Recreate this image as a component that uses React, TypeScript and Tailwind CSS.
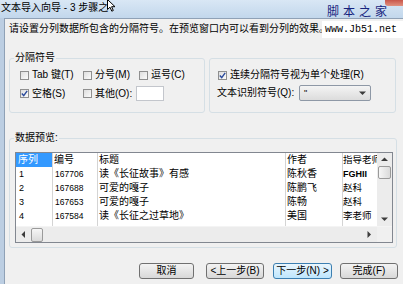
import React from "react";

const Check = ({ checked }: { checked?: boolean }) => (
  <span className="w-[9px] h-[9px] shrink-0 border border-[#8f8f8f] bg-gradient-to-br from-[#dedede] to-[#fbfbfb] flex items-center justify-center">
    {checked && (
      <svg width="7" height="7" viewBox="0 0 7 7">
        <path d="M0.8 3.6 L2.7 5.6 L6.2 0.8" fill="none" stroke="#2a4a9c" strokeWidth="1.4" />
      </svg>
    )}
  </span>
);

const CheckItem = ({
  label,
  checked,
  width,
}: {
  label: string;
  checked?: boolean;
  width: string;
}) => (
  <div className={`flex items-center gap-[3px] ${width}`}>
    <Check checked={checked} />
    <span className="leading-[12px] whitespace-nowrap">{label}</span>
  </div>
);

const Arrow = ({ dir }: { dir: "up" | "down" | "left" | "right" }) => {
  const d =
    dir === "up"
      ? "M0 4 L3.5 0.5 L7 4 Z"
      : dir === "down"
      ? "M0 0.5 L3.5 4 L7 0.5 Z"
      : dir === "left"
      ? "M4 0 L0.5 3.5 L4 7 Z"
      : "M0.5 0 L4 3.5 L0.5 7 Z";
  const vertical = dir === "up" || dir === "down";
  return (
    <svg width={vertical ? 7 : 5} height={vertical ? 5 : 7} viewBox={vertical ? "0 0 7 5" : "0 0 5 7"}>
      <path d={d} fill="#3c3c3c" />
    </svg>
  );
};

const rows = [
  ["1", "167706", "读《长征故事》有感", "陈秋香", "FGHII"],
  ["2", "167688", "可爱的嘎子", "陈鹏飞", "赵科"],
  ["3", "167653", "可爱的嘎子", "陈畅", "赵科"],
  ["4", "167584", "读《长征之过草地》", "美国", "李老师"],
];

const columns = [
  { title: "序列", width: "w-[37px]", border: true },
  { title: "编号", width: "w-[45px]", border: true },
  { title: "标题", width: "w-[188px]", border: true },
  { title: "作者", width: "w-[57px]", border: true },
  { title: "指导老师", width: "w-[34px]", border: false },
];

const App: React.FC = () => {
  return (
    <div className="relative w-[403px] h-[284px] overflow-hidden bg-[#bccee2] text-[10px] text-black font-['Liberation_Sans','Noto_Sans_CJK_SC',sans-serif]">
      {/* Title bar */}
      <div className="h-[18px] flex items-center pl-[1px] pb-[2px] bg-gradient-to-b from-[#d9e7f5] to-[#c2d7ec]">
        <span className="leading-[12px]">文本导入向导 - 3 步骤之</span>
      </div>

      {/* Dialog body */}
      <div className="ml-[4px] h-[266px] border-l border-t border-[#8fa1b6] bg-[#f0f0f0] flex flex-col">
        <p className="mt-[4px] ml-[4px] h-[12px] leading-[12px] whitespace-nowrap">
          请设置分列数据所包含的分隔符号。在预览窗口内可以看到分列的效果。
        </p>

        {/* Delimiter groups */}
        <div className="mt-[17px] ml-[4px] flex items-start gap-[4px]">
          <fieldset className="w-[196px] h-[61px] border border-[#d5dfe5] rounded-[3px] p-0">
            <legend className="ml-[4px] px-[1px] leading-[12px]">分隔符号</legend>
            <div className="mt-[4px] pl-[10px] h-[14px] flex items-center">
              <CheckItem label="Tab 键(T)" width="w-[63px]" />
              <CheckItem label="分号(M)" width="w-[56px]" />
              <CheckItem label="逗号(C)" width="w-[50px]" />
            </div>
            <div className="mt-[4px] pl-[10px] h-[15px] flex items-center">
              <CheckItem label="空格(S)" checked width="w-[63px]" />
              <CheckItem label="其他(O):" width="w-[53px]" />
              <span className="w-[28px] h-[15px] border border-[#c3c6cc] bg-white" />
            </div>
          </fieldset>

          <fieldset className="mt-[6px] w-[187px] h-[55px] border border-[#d5dfe5] rounded-[3px] p-0">
            <div className="mt-[9px] pl-[8px] h-[14px] flex items-center">
              <CheckItem label="连续分隔符号视为单个处理(R)" checked width="w-[170px]" />
            </div>
            <div className="mt-[3px] pl-[7px] h-[16px] flex items-center">
              <span className="w-[82px] leading-[12px] whitespace-nowrap">文本识别符号(Q):</span>
              <div className="w-[72px] h-[16px] border border-[#8e98a6] rounded-[2px] bg-gradient-to-b from-[#f4f4f4] to-[#dcdcdc] flex items-center justify-between pl-[4px] pr-[4px]">
                <span className="leading-[10px] text-[9px]">"</span>
                <Arrow dir="down" />
              </div>
            </div>
          </fieldset>
        </div>

        {/* Data preview */}
        <fieldset className="mt-[19px] ml-[4px] w-[388px] h-[116px] border border-[#d5dfe5] rounded-[3px] p-0">
          <legend className="ml-[4px] px-[1px] leading-[12px]">数据预览:</legend>
          <div className="mt-[8px] ml-[5px] w-[378px] h-[91px] border border-[#828790] bg-white flex flex-col">
            <div className="flex h-[73px]">
              <div className="flex w-[361px] overflow-hidden">
                {columns.map((col, ci) => (
                  <div
                    key={col.title}
                    className={`${col.width} shrink-0 overflow-hidden ${col.border ? "border-r border-[#d4d4d4]" : ""}`}
                  >
                    <div
                      className={`h-[14px] leading-[14px] whitespace-nowrap ${
                        ci === 0 ? "bg-[#3399ff] text-white pl-[2px]" : ci === 4 ? "pl-[0px] text-[9.5px]" : "pl-[1px]"
                      }`}
                    >
                      {col.title}
                    </div>
                    {rows.map((r) => (
                      <div
                        key={r[0] + ci}
                        className={`h-[14px] leading-[14px] whitespace-nowrap ${
                          ci === 0 ? "pl-[3px] text-[9px]" : ci === 1 ? "pl-[2px] text-[8.5px]" : ci === 4 ? "pl-[0px] text-[9.5px]" : "pl-[1px]"
                        } ${r[ci] === "FGHII" ? "text-[9px] font-bold" : ""}`}
                      >
                        {r[ci]}
                      </div>
                    ))}
                  </div>
                ))}
              </div>
              {/* Vertical scrollbar */}
              <div className="w-[15px] bg-[#ececec] flex flex-col items-center">
                <div className="h-[13px] flex items-center justify-center">
                  <Arrow dir="up" />
                </div>
                <div className="w-[13px] h-[13px] border border-[#9a9a9a] rounded-[2px] bg-gradient-to-r from-[#f6f6f6] to-[#dadada]" />
                <div className="flex-1" />
                <div className="h-[14px] flex items-center justify-center">
                  <Arrow dir="down" />
                </div>
              </div>
            </div>
            {/* Horizontal scrollbar */}
            <div className="h-[16px] flex border-t border-[#f4f4f4]">
              <div className="flex-1 bg-[#ececec] flex items-center">
                <div className="w-[15px] flex items-center justify-center">
                  <Arrow dir="left" />
                </div>
                <div className="w-[12px] h-[14px] border border-[#9a9a9a] rounded-[2px] bg-gradient-to-b from-[#f6f6f6] to-[#dadada]" />
                <div className="flex-1" />
                <div className="w-[15px] flex items-center justify-center">
                  <Arrow dir="right" />
                </div>
              </div>
              <div className="w-[15px] bg-[#f0f0f0]" />
            </div>
          </div>
        </fieldset>

        {/* Buttons */}
        <div className="mt-[15px] ml-[134px] flex items-center">
          <div className="w-[55px] h-[16px] border border-[#707070] rounded-[3px] bg-gradient-to-b from-[#f3f3f3] to-[#d8d8d8] flex items-center justify-center leading-[12px]">
            取消
          </div>
          <div className="ml-[12px] w-[58px] h-[16px] border border-[#707070] rounded-[3px] bg-gradient-to-b from-[#f3f3f3] to-[#d8d8d8] flex items-center justify-center leading-[12px] whitespace-nowrap">
            &lt;上一步(B)
          </div>
          <div className="ml-[9px] w-[59px] h-[16px] border border-[#3c7fb1] rounded-[3px] bg-gradient-to-b from-[#eaf6fd] to-[#bee6fd] flex items-center justify-center leading-[12px] whitespace-nowrap">
            下一步(N) &gt;
          </div>
          <div className="ml-[8px] w-[58px] h-[16px] border border-[#707070] rounded-[3px] bg-gradient-to-b from-[#f3f3f3] to-[#d8d8d8] flex items-center justify-center leading-[12px] whitespace-nowrap">
            完成(F)
          </div>
        </div>
      </div>

      {/* Close button peeking at the corner */}
      <div className="absolute right-0 top-0 w-[18px] h-[6px] rounded-bl-[3px] bg-gradient-to-b from-[#c8554a] to-[#e0907f]" />

      {/* Mouse cursor */}
      <svg className="absolute left-[107px] top-[-1px]" width="9" height="13" viewBox="0 0 9 13">
        <path d="M0.5 0.5 L0.5 10.5 L3 8.2 L4.8 12.2 L6.3 11.5 L4.6 7.7 L8 7.7 Z" fill="#ffffff" stroke="#000000" strokeWidth="1" />
      </svg>

      {/* Watermark */}
      <div className="absolute left-[327px] top-[5px] text-[12px] leading-[14px] tracking-[4px] text-[#16237d] whitespace-nowrap">
        脚本之家
      </div>
      <div className="absolute left-[322px] top-[21px] w-[81px] h-[17px] bg-white flex items-center pl-[3px]">
        <span className="font-['Liberation_Mono',monospace] text-[10px] leading-[10px]">
          www.Jb51.net
        </span>
      </div>
    </div>
  );
};

export default App;
